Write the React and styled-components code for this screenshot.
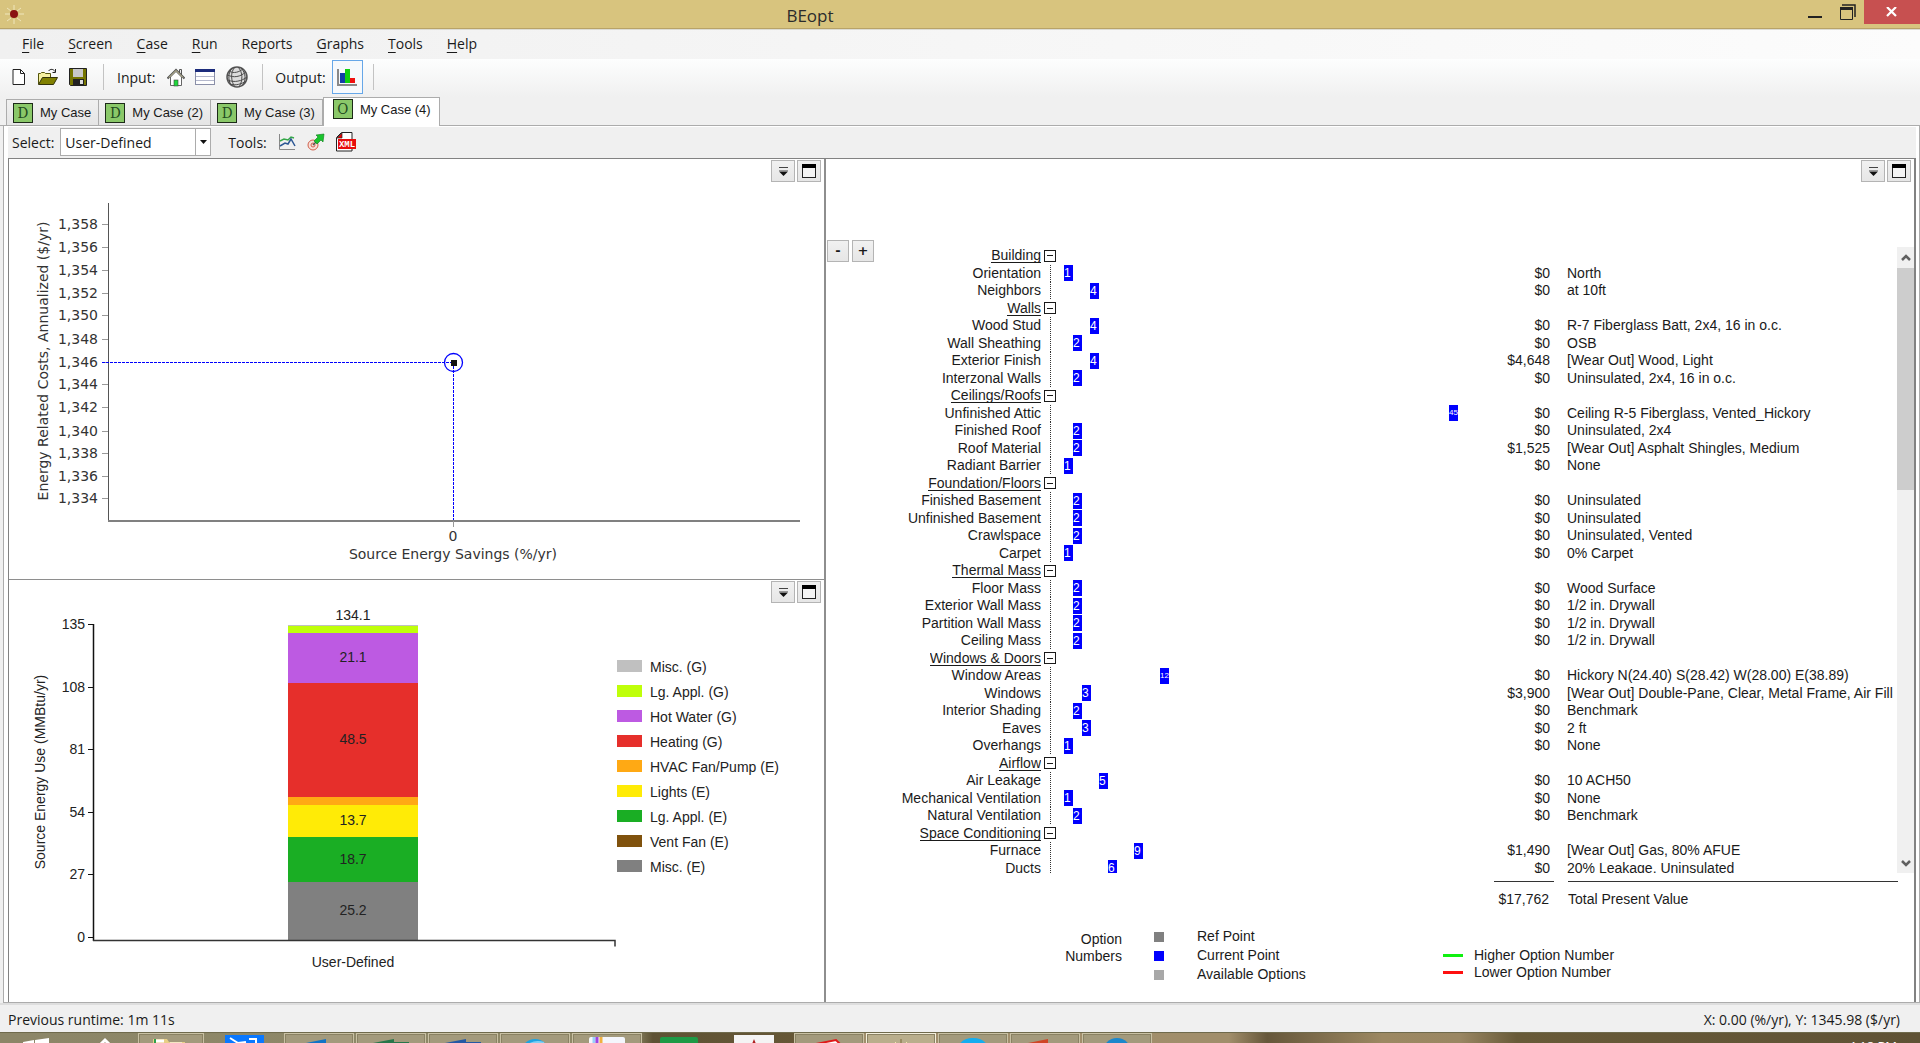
import React from 'react';
import styled, { createGlobalStyle, css } from 'styled-components';

const GlobalStyle = createGlobalStyle`
  * {
    box-sizing: border-box;
  }
  body {
    margin: 0;
    background: #f0f0f0;
    color: #1a1a1a;
    font-family: 'Open Sans', 'Noto Sans', sans-serif;
    font-size: 14px;
  }
  button, select {
    font: inherit;
    color: inherit;
    padding: 0;
    border: 0;
    background: none;
  }
  svg {
    display: block;
  }
`;

//===================================================
// ===================== Data =======================
//===================================================

const MENUS = [
  ['', 'F', 'ile'],
  ['', 'S', 'creen'],
  ['', 'C', 'ase'],
  ['', 'R', 'un'],
  ['Re', 'p', 'orts'],
  ['', 'G', 'raphs'],
  ['', 'T', 'ools'],
  ['', 'H', 'elp']
];

const TABS = [
  { letter: 'D', name: 'My Case' },
  { letter: 'D', name: 'My Case (2)' },
  { letter: 'D', name: 'My Case (3)' },
  { letter: 'O', name: 'My Case (4)', active: true }
];

// [label, option number, cost, description]; a row with only a label is a category
const OPTIONS = [
  ['Building'],
  ['Orientation', 1, '$0', 'North'],
  ['Neighbors', 4, '$0', 'at 10ft'],
  ['Walls'],
  ['Wood Stud', 4, '$0', 'R-7 Fiberglass Batt, 2x4, 16 in o.c.'],
  ['Wall Sheathing', 2, '$0', 'OSB'],
  ['Exterior Finish', 4, '$4,648', '[Wear Out] Wood, Light'],
  ['Interzonal Walls', 2, '$0', 'Uninsulated, 2x4, 16 in o.c.'],
  ['Ceilings/Roofs'],
  ['Unfinished Attic', 45, '$0', 'Ceiling R-5 Fiberglass, Vented_Hickory'],
  ['Finished Roof', 2, '$0', 'Uninsulated, 2x4'],
  ['Roof Material', 2, '$1,525', '[Wear Out] Asphalt Shingles, Medium'],
  ['Radiant Barrier', 1, '$0', 'None'],
  ['Foundation/Floors'],
  ['Finished Basement', 2, '$0', 'Uninsulated'],
  ['Unfinished Basement', 2, '$0', 'Uninsulated'],
  ['Crawlspace', 2, '$0', 'Uninsulated, Vented'],
  ['Carpet', 1, '$0', '0% Carpet'],
  ['Thermal Mass'],
  ['Floor Mass', 2, '$0', 'Wood Surface'],
  ['Exterior Wall Mass', 2, '$0', '1/2 in. Drywall'],
  ['Partition Wall Mass', 2, '$0', '1/2 in. Drywall'],
  ['Ceiling Mass', 2, '$0', '1/2 in. Drywall'],
  ['Windows & Doors'],
  ['Window Areas', 12, '$0', 'Hickory N(24.40) S(28.42) W(28.00) E(38.89)'],
  ['Windows', 3, '$3,900', '[Wear Out] Double-Pane, Clear, Metal Frame, Air Fill'],
  ['Interior Shading', 2, '$0', 'Benchmark'],
  ['Eaves', 3, '$0', '2 ft'],
  ['Overhangs', 1, '$0', 'None'],
  ['Airflow'],
  ['Air Leakage', 5, '$0', '10 ACH50'],
  ['Mechanical Ventilation', 1, '$0', 'None'],
  ['Natural Ventilation', 2, '$0', 'Benchmark'],
  ['Space Conditioning'],
  ['Furnace', 9, '$1,490', '[Wear Out] Gas, 80% AFUE'],
  ['Ducts', 6, '$0', '20% Leakage, Uninsulated']
];

const COST_TICKS = [
  ['1,358', 64], ['1,356', 87], ['1,354', 110], ['1,352', 133], ['1,350', 155],
  ['1,348', 179], ['1,346', 202], ['1,344', 224], ['1,342', 247], ['1,340', 271],
  ['1,338', 293], ['1,336', 316], ['1,334', 338]
];

const USE_TICKS = [['135', 44], ['108', 107], ['81', 169], ['54', 232], ['27', 294], ['0', 357]];

// top and bottom of each piece of the stacked bar
const STACK = [
  { top: 45, bottom: 46, color: '#c0c0c0' },
  { top: 46, bottom: 53, color: '#bfff0a' },
  { top: 53, bottom: 103, color: '#bd5ae2', value: '21.1' },
  { top: 103, bottom: 217, color: '#e62f2b', value: '48.5' },
  { top: 217, bottom: 225, color: '#ffa914' },
  { top: 225, bottom: 257, color: '#ffeb06', value: '13.7' },
  { top: 257, bottom: 302, color: '#1aae24', value: '18.7' },
  { top: 302, bottom: 360, color: '#808080', value: '25.2' }
];

const END_USES = [
  ['Misc. (G)', '#c0c0c0'],
  ['Lg. Appl. (G)', '#bfff0a'],
  ['Hot Water (G)', '#bd5ae2'],
  ['Heating (G)', '#e62f2b'],
  ['HVAC Fan/Pump (E)', '#ffa914'],
  ['Lights (E)', '#ffeb06'],
  ['Lg. Appl. (E)', '#1aae24'],
  ['Vent Fan (E)', '#80520d'],
  ['Misc. (E)', '#808080']
];

//===================================================
// ================ Window chrome ===================
//===================================================

const Window = styled.div`
  display: flex;
  flex-direction: column;
  height: 100vh;
  overflow: hidden;
`;

const TitleBar = styled.header`
  display: flex;
  height: 30px;
  flex: none;
  background: #d8c47e;
  border-bottom: 1px solid #dcdcd4;
  box-shadow: inset 0 -1px 0 #b8a368;
`;

const TitleIcon = styled.div`
  width: 300px;
  padding: 5px 0 0 5px;
`;

const Title = styled.h1`
  flex: 1;
  margin: 0;
  padding-top: 4px;
  text-align: center;
  font-size: 17px;
  line-height: 24px;
  font-weight: 400;
  color: #2b2b2b;
`;

const WindowButtons = styled.div`
  display: flex;
  justify-content: flex-end;
  width: 600px;
`;

const WindowButton = styled.button`
  display: flex;
  align-items: center;
  justify-content: center;
  width: ${(props) => (props.$close ? 56 : 33)}px;
  height: 24px;
  background: ${(props) => (props.$close ? '#c75050' : 'transparent')};
`;

const MenuBar = styled.nav`
  display: flex;
  flex: none;
  align-items: flex-start;
  gap: 24px;
  height: 29px;
  padding-left: 22px;
  line-height: 27px;
  background: linear-gradient(to right, #f0f0f0, #fcfcfc);
  & u {
    text-underline-offset: 3px;
  }
`;

const ToolBar = styled.div`
  display: flex;
  flex: none;
  align-items: center;
  height: 38px;
  padding: 0 0 2px 10px;
  background: linear-gradient(to bottom, #fdfefe, #f0f0f0);
`;

const ToolButton = styled.button`
  display: flex;
  align-items: center;
  justify-content: center;
  width: ${(props) => props.$width || 29}px;
  height: 34px;
  ${(props) => props.$pressed && css`
    border: 1px solid #66a7e8;
    background: #f6f9fc;
  `}
`;

const Separator = styled.div`
  width: 1px;
  height: 26px;
  margin: 0 ${(props) => props.$right || 13}px 0 ${(props) => props.$left || 10}px;
  background: #c3c3c3;
`;

const BarText = styled.span`
  white-space: nowrap;
  margin-right: 6px;
`;

//===================================================
// ===================== Tabs =======================
//===================================================

const TabStrip = styled.div`
  display: flex;
  flex: none;
  align-items: flex-end;
  height: 29px;
  padding-left: 6px;
  border-bottom: 1px solid #acacac;
`;

const Tab = styled.button`
  display: flex;
  gap: 7px;
  align-items: ${(props) => (props.$active ? 'flex-start' : 'center')};
  height: ${(props) => (props.$active ? 29 : 26)}px;
  margin-bottom: ${(props) => (props.$active ? -1 : 0)}px;
  padding: ${(props) => (props.$active ? '1px 8px 0 9px' : '0 7px 0 6px')};
  border: 1px solid #acacac;
  border-bottom: 0;
  border-left-width: ${(props) => (props.$first || props.$active ? 1 : 0)}px;
  background: ${(props) => (props.$active ? '#fff' : 'linear-gradient(to bottom, #f0f0f0, #e5e5e5)')};
  font-family: 'Liberation Sans', sans-serif;
  font-size: 13px;
  line-height: 22px;
`;

const CaseBadge = styled.span`
  display: block;
  width: 20px;
  height: 20px;
  border: 1px solid #1c2a18;
  background: #8ac869;
  color: #1f4a1f;
  font-family: 'DejaVu Serif Condensed', 'DejaVu Serif', serif;
  font-size: 15px;
  line-height: 18px;
  text-align: center;
`;

//===================================================
// =================== Case page ====================
//===================================================

const Page = styled.main`
  display: flex;
  flex: 1;
  flex-direction: column;
  min-height: 0;
  margin-left: 3px;
  padding: 1px 3px 0 4px;
  border: 1px solid #acacac;
  border-top: 0;
  background: #fff;
`;

const SelectBar = styled.div`
  display: flex;
  flex: none;
  align-items: center;
  height: 31px;
  padding: 0 0 1px 4px;
  background: #f0f0f0;
`;

const DropDown = styled.div`
  display: flex;
  width: 151px;
  height: 28px;
  margin-right: 17px;
  border: 1px solid #acacac;
  background: #fff;
  & > select {
    flex: 1;
    min-width: 0;
    padding-left: 4px;
    appearance: none;
  }
  & > span {
    display: flex;
    align-items: center;
    justify-content: center;
    width: 15px;
    border-left: 1px solid #acacac;
  }
`;

const Panels = styled.div`
  display: grid;
  flex: 1;
  min-height: 0;
  grid-template-columns: 817fr 1088fr;
  border: 1px solid #828282;
  border-width: 1px 2px 0 1px;
`;

const LeftColumn = styled.div`
  display: grid;
  min-height: 0;
  grid-template-rows: 420fr 423fr;
  border-right: 2px solid #8e8e8e;
`;

const Panel = styled.section`
  position: relative;
  min-height: 0;
  & + & {
    border-top: 1px solid #8e8e8e;
  }
  & > svg {
    width: 100%;
    height: 100%;
  }
`;

// sits over the corner of the chart
const PanelButtons = styled.div`
  position: absolute;
  top: 1px;
  right: 3px;
  display: flex;
  gap: 2px;
`;

const SmallButton = styled.button`
  display: flex;
  align-items: center;
  justify-content: center;
  width: ${(props) => props.$size || 24}px;
  height: ${(props) => props.$size || 22}px;
  border: 1px solid #b4b4b4;
  background: linear-gradient(to bottom, #f1f1f1, #e6e6e6);
  font-family: 'DejaVu Sans', sans-serif;
  font-size: 13px;
  font-weight: 700;
  line-height: 16px;
`;

//===================================================
// ================= Option panel ===================
//===================================================

const OptionPanel = styled(Panel)`
  display: flex;
  flex-direction: column;
  padding-top: 81px;
  font-family: 'Liberation Sans', sans-serif;
`;

const OptionBody = styled.div`
  display: flex;
  flex: 1;
  min-height: 0;
`;

const FoldButtons = styled.div`
  display: flex;
  flex: none;
  align-items: flex-start;
  gap: 3px;
  width: 52px;
  padding-left: 1px;
`;

const OptionView = styled.div`
  display: flex;
  flex: 1;
  min-width: 0;
  margin-top: 7px;
  overflow: hidden;
`;

const OptionScroll = styled.div`
  flex: 1;
  min-width: 0;
  overflow: hidden;
`;

const OptionTable = styled.table`
  width: 100%;
  table-layout: fixed;
  border-collapse: collapse;
  & td, & th {
    padding: 0;
    font-weight: 400;
    line-height: 17px;
    white-space: nowrap;
  }
  & th {
    text-align: right;
  }
`;

const OptionRow = styled.tr`
  height: 17px;
  &:nth-child(even) {
    height: 18px;
  }
`;

const CategoryName = styled.span`
  border-bottom: 1px solid #1a1a1a;
  display: inline-block;
  height: 16px;
  line-height: 17px;
  overflow: hidden;
  vertical-align: top;
`;

const ToggleCell = styled.td`
  vertical-align: middle;
`;

const Toggle = styled.button`
  display: flex;
  align-items: center;
  justify-content: center;
  width: 12px;
  height: 12px;
  margin-left: 3px;
  border: 1px solid #1a1a1a;
  &::before {
    content: '';
    width: 6px;
    height: 1px;
    background: #1a1a1a;
  }
`;

const Guide = styled.div`
  width: 1px;
  height: 17px;
  margin-left: 9px;
  background: repeating-linear-gradient(to bottom, #333 0, #333 1px, #fff 1px, #fff 2px);
`;

const Marker = styled.div`
  width: 9px;
  height: 16px;
  background: #0000fe;
  color: #fff;
  font-size: ${(props) => (props.$wide ? 8 : 12)}px;
  line-height: 16px;
`;

const Cost = styled.td`
  text-align: right;
`;

const Description = styled.td`
  && {
    padding-left: 17px;
  }
`;

const ScrollBar = styled.div`
  display: flex;
  flex: none;
  flex-direction: column;
  width: 17px;
  background: #f0f0f0;
`;

const ScrollArrow = styled.button`
  display: flex;
  flex: none;
  align-items: center;
  justify-content: center;
  height: 21px;
`;

const ScrollTrack = styled.div`
  flex: 1;
  & > div {
    height: 38%;
    background: #cdcdcd;
  }
`;

const Totals = styled.div`
  display: flex;
  flex: none;
  justify-content: flex-end;
  gap: 14px;
  padding: 8px 16px 0 0;
  line-height: 35px;
`;

const TotalCell = styled.div`
  width: ${(props) => props.$width}px;
  padding-right: 5px;
  border-top: 1px solid #333;
  text-align: ${(props) => props.$align || 'left'};
`;

const OptionLegend = styled.div`
  display: flex;
  flex: none;
  align-items: flex-start;
  height: 85px;
  padding: 10px 0 0 235px;
`;

const LegendTitle = styled.div`
  width: 61px;
  margin-right: 32px;
  line-height: 17px;
  padding-top: 4px;
  text-align: right;
`;

const LegendList = styled.ul`
  display: flex;
  flex-direction: column;
  flex: none;
  width: ${(props) => props.$width}px;
  margin: 0;
  padding: ${(props) => props.$top || 0}px 0 0;
  list-style: none;
  line-height: ${(props) => props.$line}px;
`;

const LegendItem = styled.li`
  display: flex;
  align-items: center;
  gap: ${(props) => props.$gap}px;
  white-space: nowrap;
  &::before {
    content: '';
    width: ${(props) => props.$swatch[0]}px;
    height: ${(props) => props.$swatch[1]}px;
    background: ${(props) => props.$color};
  }
`;

//===================================================
// ============ Status bar and task bar =============
//===================================================

const StatusBar = styled.footer`
  display: flex;
  flex: none;
  justify-content: space-between;
  height: 29px;
  padding: 2px 20px 0 8px;
  border-top: 2px solid #dedede;
  background: #f0f0f0;
  line-height: 26px;
`;

const TaskBar = styled.div`
  display: flex;
  flex: none;
  gap: 2px;
  height: 11px;
  overflow: hidden;
  border-top: 1px solid #6f6a4c;
  background: linear-gradient(to right, #8c8668 0, #8f8867 33%, #5e5234 34%, #665736 42%, #a08e6c 45%, #a18e6b 64%, #66573a 66%, #9c8862 72%, #9a8763 76%, #685a38 79%, #5f5235 100%);
`;

const Task = styled.button`
  display: flex;
  flex: none;
  justify-content: center;
  width: ${(props) => props.$width || 70}px;
  height: 40px;
  padding-top: ${(props) => (props.$open ? 3 : 2)}px;
  ${(props) => props.$open && css`
    border: 1px solid ${props.$active ? '#f4efdc' : '#c9c1a4'};
    background: ${props.$active ? '#b9ae8c' : '#a39a7c'};
    box-shadow: inset 0 0 0 1px #8a8263;
  `}
`;

const Clock = styled.span`
  margin-left: auto;
  padding: 5px 23px 0 0;
  color: #fff;
  font-size: 13px;
  line-height: 16px;
`;

//===================================================
// ===================== Icons ======================
//===================================================

const SunIcon = () => (
  <svg width="20" height="20" viewBox="0 0 20 20">
    <g stroke="#efe6bc" strokeWidth="1">
      <path d="M9 0v5M9 14v5M0 9h5M14 9h5M2 3l4 3M16 3l-4 3M2 16l4-3M16 16l-4-3" />
    </g>
    <circle cx="9" cy="9" r="4" fill="#8a1212" />
  </svg>
);

const NewIcon = () => (
  <svg width="16" height="18" viewBox="0 0 16 18">
    <path d="M2 1.500h7.500l4 4v11H2z" fill="#fff" stroke="#222" />
    <path d="M9.500 1.500v4h4" fill="none" stroke="#222" />
  </svg>
);

const OpenIcon = () => (
  <svg width="22" height="18" viewBox="0 0 22 18">
    <path d="M1.500 16V5.500h2l1-1h3l1 1h5V9" fill="#f5f0a0" stroke="#55550a" />
    <path d="M1.500 16.500l4-7h15l-4 7z" fill="#808000" stroke="#33330a" />
    <path d="M11.500 3c2-2.500 5-2 6.500.5M18.500 1v3.500h-3" fill="none" stroke="#222" />
  </svg>
);

const SaveIcon = () => (
  <svg width="18" height="18" viewBox="0 0 18 18">
    <path d="M.5.5h17v17h-16l-1-1z" fill="#757500" stroke="#222" />
    <rect x="4" y="1" width="10" height="8" fill="#c8c8c8" />
    <rect x="4" y="11" width="11" height="6" fill="#222" />
    <rect x="11" y="12" width="3" height="4" fill="#ddd" />
  </svg>
);

const HouseIcon = () => (
  <svg width="18" height="19" viewBox="0 0 18 19">
    <path d="M12.500 5V1.500h2V7" fill="#eee" stroke="#555" />
    <path d="M3.500 9v8.500h11V9L9 3.500z" fill="#fff" stroke="#666" />
    <path d="M.5 10.500L9 2l8.500 8.500" fill="none" stroke="#555" strokeWidth="2" />
    <path d="M2 9.500L9 2.500l7 7" fill="none" stroke="#d8d2a4" />
    <rect x="7" y="12" width="4" height="6" fill="#1fd83b" stroke="#444" strokeWidth=".6" />
  </svg>
);

const GridIcon = () => (
  <svg width="21" height="17" viewBox="0 0 21 17">
    <rect x=".5" y=".5" width="19" height="15" fill="#fff" stroke="#8a8fa8" />
    <rect x="0" y="0" width="20" height="3" fill="#1c2c7c" />
    <path d="M1 7.500h18M1 11.500h18" stroke="#b4b8cc" />
  </svg>
);

const GlobeIcon = () => (
  <svg width="22" height="22" viewBox="0 0 22 22">
    <circle cx="11" cy="11" r="10" fill="#dcdcdc" stroke="#555" strokeWidth="1.500" />
    <g fill="none" stroke="#4c4c4c">
      <path d="M3 5c5 3 10 1 14-2M1.500 9c6 3 13 2 18-3M2 14c6 3 14 1 19-3M4 18c5 2 12 0 16-3" />
      <path d="M9 1C4 6 5 16 9 21M12 1c5 5 5 14 1 20M15 2c5 5 5 12 2 17M6 2C2 7 2 14 5 19" />
    </g>
  </svg>
);

const BarsIcon = () => (
  <svg width="20" height="19" viewBox="0 0 20 19">
    <path d="M1 1v16h19" fill="none" stroke="#888" strokeWidth="2" />
    <rect x="3" y="5" width="5" height="10" fill="#123ea6" />
    <rect x="8" y="1" width="5" height="14" fill="#10d010" />
    <rect x="13" y="10" width="5" height="5" fill="#f01010" />
  </svg>
);

const LinesIcon = () => (
  <svg width="18" height="18" viewBox="0 0 18 18">
    <path d="M1.500 1v15.500H17" fill="none" stroke="#888" />
    <path d="M2 8l4-2 4 1 3-3 3 1" fill="none" stroke="#35a848" strokeWidth="1.500" />
    <path d="M2 13l5-3 3 1 3-5 4 7" fill="none" stroke="#2c5794" strokeWidth="1.500" />
  </svg>
);

const TargetIcon = () => (
  <svg width="18" height="18" viewBox="0 0 18 18">
    <circle cx="6" cy="12" r="5" fill="#f7dfd8" stroke="#d0604c" />
    <circle cx="6" cy="12" r="2" fill="none" stroke="#d0604c" />
    <path d="M6 12l5-5" stroke="#555" strokeWidth="1.500" />
    <path d="M9 2l8-1-1 8-2-2-4 4-3-3 4-4z" fill="#18c42c" stroke="#0a7a18" strokeWidth=".6" />
  </svg>
);

const XmlIcon = () => (
  <svg width="21" height="20" viewBox="0 0 21 20">
    <path d="M6.500.5H17v18.500H1.500V5.500z" fill="#fff" stroke="#222" />
    <path d="M2 6l5-5v5z" fill="#e00" stroke="#222" strokeWidth=".7" />
    <rect x="3" y="7" width="18" height="10" fill="#e80c0c" />
    <text x="12" y="15" textAnchor="middle" fontFamily="Liberation Mono, monospace" fontWeight="700" fontSize="9" fill="#fff">XML</text>
  </svg>
);

const OptionsIcon = () => (
  <svg width="9" height="9" viewBox="0 0 9 9">
    <path d="M0 .5h9" stroke="#444" />
    <path d="M0 3.500h9" stroke="#999" />
    <path d="M0 4.500h9L4.500 9z" fill="#111" />
  </svg>
);

const MaximizeIcon = () => (
  <svg width="14" height="14" viewBox="0 0 14 14">
    <rect x=".5" y=".5" width="13" height="13" fill="#f4f4f4" stroke="#222" />
    <rect width="14" height="4" fill="#000" />
  </svg>
);

const Chevron = ({ down }) => (
  <svg width="10" height="8" viewBox="0 0 10 8">
    <path d={down ? 'M1 2l4 4 4-4' : 'M1 6l4-4 4 4'} fill="none" stroke="#606060" strokeWidth="2.500" />
  </svg>
);

//===================================================
// ==================== Panels ======================
//===================================================

const CornerButtons = () => (
  <PanelButtons>
    <SmallButton aria-label="Graph options"><OptionsIcon /></SmallButton>
    <SmallButton aria-label="Maximize"><MaximizeIcon /></SmallButton>
  </PanelButtons>
);

function CostChart() {
  return (
    <svg viewBox="0 -1 815 420" fontFamily="DejaVu Sans, sans-serif" fontSize="14" fill="#333">
      {COST_TICKS.map(([label, y]) => (
        <g key={label}>
          <text x="89" y={y + 5} textAnchor="end">{label}</text>
          <path d={`M93 ${y + 0.5}h6`} stroke="#999" />
        </g>
      ))}
      <path d="M99.500 43v318" stroke="#555" />
      <path d="M99 361h692" stroke="#808080" strokeWidth="2" />
      <path d="M444.500 361v6" stroke="#999" />
      <g fill="none" stroke="#0000fe" strokeDasharray="3 1">
        <path d="M93 202.500h351" />
        <path d="M444.500 202v158" />
      </g>
      <circle cx="444.500" cy="202.500" r="9" fill="none" stroke="#0000fe" strokeWidth="1.300" />
      <rect x="442" y="200" width="6" height="6" fill="#111" />
      <text x="444" y="381" textAnchor="middle">0</text>
      <text x="444" y="399" textAnchor="middle">Source Energy Savings (%/yr)</text>
      <text transform="translate(39 201) rotate(-90)" textAnchor="middle">Energy Related Costs, Annualized ($/yr)</text>
    </svg>
  );
}

function UseChart() {
  return (
    <svg viewBox="0 0 815 422" fontFamily="Liberation Sans, sans-serif" fontSize="14" fill="#222">
      {USE_TICKS.map(([label, y]) => (
        <g key={label}>
          <text x="76" y={y + 5} textAnchor="end">{label}</text>
          <path d={`M79 ${y + 0.5}h5`} stroke="#111" />
        </g>
      ))}
      {STACK.map(({ top, bottom, color, value }) => (
        <g key={top}>
          <rect x="279" y={top} width="130" height={bottom - top} fill={color} />
          {value && <text x="344" y={(top + bottom) / 2 + 4} textAnchor="middle">{value}</text>}
        </g>
      ))}
      <text x="344" y="40" textAnchor="middle">134.1</text>
      <path d="M84.500 44v317" stroke="#111" strokeWidth="1.500" />
      <path d="M84 360.500h522v6" fill="none" stroke="#333" strokeWidth="1.500" />
      <text x="344" y="387" textAnchor="middle">User-Defined</text>
      <text transform="translate(36 192) rotate(-90)" textAnchor="middle">Source Energy Use (MMBtu/yr)</text>
      {END_USES.map(([name, color], i) => (
        <g key={name}>
          <rect x="608" y={80 + i * 25} width="25" height="12" fill={color} />
          <text x="641" y={92 + i * 25}>{name}</text>
        </g>
      ))}
    </svg>
  );
}

const Option = ({ label, number, cost, text }) => {
  if (!number) {
    return (
      <OptionRow>
        <th scope="row"><CategoryName>{label}</CategoryName></th>
        <ToggleCell><Toggle aria-label={`Collapse ${label}`} /></ToggleCell>
        <td colSpan={3} />
      </OptionRow>
    );
  }
  return (
    <OptionRow>
      <th scope="row">{label}</th>
      <ToggleCell><Guide /></ToggleCell>
      <td>
        <Marker $wide={number > 9} style={{ marginLeft: Math.round((number - 1) * 35 / 4) }}>{number}</Marker>
      </td>
      <Cost>{cost}</Cost>
      <Description>{text}</Description>
    </OptionRow>
  );
};

function OptionList() {
  return (
    <OptionPanel>
      <CornerButtons />
      <OptionBody>
        <FoldButtons>
          <SmallButton $size={22}>-</SmallButton>
          <SmallButton $size={22}>+</SmallButton>
        </FoldButtons>
        <OptionView>
          <OptionScroll>
            <OptionTable>
              <colgroup>
                <col width="163" />
                <col width="23" />
                <col />
                <col width="60" />
                <col width="347" />
              </colgroup>
              <tbody>
                {OPTIONS.map(([label, number, cost, text]) => (
                  <Option key={label} label={label} number={number} cost={cost} text={text} />
                ))}
              </tbody>
            </OptionTable>
          </OptionScroll>
          <ScrollBar>
            <ScrollArrow aria-label="Scroll up"><Chevron /></ScrollArrow>
            <ScrollTrack><div /></ScrollTrack>
            <ScrollArrow aria-label="Scroll down"><Chevron down /></ScrollArrow>
          </ScrollBar>
        </OptionView>
      </OptionBody>
      <Totals>
        <TotalCell $width={60} $align="right">$17,762</TotalCell>
        <TotalCell $width={330}>Total Present Value</TotalCell>
      </Totals>
      <OptionLegend>
        <LegendTitle>Option<br />Numbers</LegendTitle>
        <LegendList $width={289} $line={19}>
          <LegendItem $gap={33} $swatch={[10, 10]} $color="#808080">Ref Point</LegendItem>
          <LegendItem $gap={33} $swatch={[10, 10]} $color="#0000fe">Current Point</LegendItem>
          <LegendItem $gap={33} $swatch={[10, 10]} $color="#a8a8a8">Available Options</LegendItem>
        </LegendList>
        <LegendList $width={200} $line={17} $top={20}>
          <LegendItem $gap={11} $swatch={[20, 3]} $color="#10f010">Higher Option Number</LegendItem>
          <LegendItem $gap={11} $swatch={[20, 3]} $color="#fe1010">Lower Option Number</LegendItem>
        </LegendList>
      </OptionLegend>
    </OptionPanel>
  );
}

//===================================================
// =================== Task bar =====================
//===================================================

const Tasks = () => (
  <TaskBar>
    <Task $width={72} aria-label="Start">
      <svg width="26" height="26" viewBox="0 0 26 26"><path d="M0 7l11-2v8H0zM12 5l14-2v10H12zM0 14h11v8L0 20zM12 14h14v10l-14-2z" fill="#fff" /></svg>
    </Task>
    <Task $width={62} aria-label="Show more">
      <svg width="20" height="20" viewBox="0 0 20 20"><path d="M4 11l6-6 6 6" fill="none" stroke="#fff" strokeWidth="3" /></svg>
    </Task>
    <Task $open $width={66} aria-label="Files">
      <svg width="36" height="30" viewBox="0 0 36 30"><path d="M0 2h14l2 3h16v22H0z" fill="#e8cf86" /><path d="M3 4h8M17 7h12" stroke="#fff" strokeWidth="3" /><path d="M2 2v5" stroke="#2ea04c" strokeWidth="2" /></svg>
    </Task>
    <Task $width={76} aria-label="Remote desktop">
      <svg width="39" height="30" viewBox="0 0 39 30"><path d="M0 0h39v30H0z" fill="#0a78ff" /><path d="M5 3l8 5 8-1M24 4h7v6" stroke="#fff" strokeWidth="2" fill="none" /></svg>
    </Task>
    <Task $open aria-label="Mail">
      <svg width="34" height="30" viewBox="0 0 34 30"><path d="M4 6l20-4v28H4z" fill="#1173c6" /></svg>
    </Task>
    <Task $open aria-label="Spreadsheet">
      <svg width="36" height="30" viewBox="0 0 36 30"><path d="M0 6l21-4v3h15v24H0z" fill="#27764a" /></svg>
    </Task>
    <Task $open aria-label="Documents">
      <svg width="36" height="30" viewBox="0 0 36 30"><path d="M0 6l21-4v3h15v24H0z" fill="#2458a4" /></svg>
    </Task>
    <Task $open aria-label="Browser">
      <svg width="30" height="30" viewBox="0 0 30 30"><circle cx="15" cy="16" r="14" fill="#1fa3e2" /><path d="M7 9c5-4 11-5 17-3" stroke="#7fd0f4" strokeWidth="2" fill="none" /></svg>
    </Task>
    <Task $open aria-label="Notes">
      <svg width="36" height="30" viewBox="0 0 36 30"><rect width="36" height="30" rx="2" fill="#f4f6fc" /><path d="M5 0v30" stroke="#9ad0f8" strokeWidth="3" /><path d="M8 0v30" stroke="#a044e0" strokeWidth="3" /><path d="M12 0v30" stroke="#f0b040" strokeWidth="3" /></svg>
    </Task>
    <Task aria-label="Publisher">
      <svg width="38" height="30" viewBox="0 0 38 30"><rect y="2" width="38" height="28" rx="2" fill="#1e9a46" /></svg>
    </Task>
    <Task $width={76} aria-label="Drafting">
      <svg width="40" height="30" viewBox="0 0 40 30"><path d="M0 0h40v30H0z" fill="#f4f4f4" /><path d="M20 4l8 20H12z" fill="#b02020" /></svg>
    </Task>
    <Task $open aria-label="Modeling">
      <svg width="30" height="30" viewBox="0 0 30 30"><path d="M2 7l20-4 6 6v16H2z" fill="#fff" stroke="#e01818" strokeWidth="2" /></svg>
    </Task>
    <Task $open $active aria-label="BEopt">
      <svg width="20" height="20" viewBox="0 0 20 20"><path d="M10 2v8" stroke="#7a6a3a" /><path d="M4 5l4 4M16 5l-4 4" stroke="#f4e9ae" /></svg>
    </Task>
    <Task $open aria-label="Chat">
      <svg width="30" height="30" viewBox="0 0 30 30"><path d="M1 8q4-7 14-7t14 7v20H1z" fill="#14adf0" /></svg>
    </Task>
    <Task $open aria-label="Slides">
      <svg width="34" height="30" viewBox="0 0 34 30"><path d="M0 6l20-4v4h14v22H0z" fill="#d04526" /></svg>
    </Task>
    <Task $open aria-label="Help">
      <svg width="28" height="30" viewBox="0 0 28 30"><circle cx="14" cy="15" r="14" fill="#1b87cc" /></svg>
    </Task>
    <Clock>4:18 PM</Clock>
  </TaskBar>
);

export default function App() {
  return (
    <Window>
      <GlobalStyle />
      <TitleBar>
        <TitleIcon><SunIcon /></TitleIcon>
        <Title>BEopt</Title>
        <WindowButtons>
          <WindowButton aria-label="Minimize">
            <svg width="14" height="16" viewBox="0 0 14 16"><path d="M0 13h14" stroke="#222" strokeWidth="2" /></svg>
          </WindowButton>
          <WindowButton aria-label="Restore">
            <svg width="16" height="16" viewBox="0 0 16 16">
              <path d="M2 1h13v12" fill="none" stroke="#222" strokeWidth="1.500" />
              <path d="M.5 4h12v11.500H.5z" fill="none" stroke="#222" />
              <path d="M0 4.500h13" stroke="#222" strokeWidth="3" />
            </svg>
          </WindowButton>
          <WindowButton $close aria-label="Close">
            <svg width="12" height="10" viewBox="0 0 12 10"><path d="M1 0l9 9M10 0L1 9" stroke="#fff" strokeWidth="2.200" /></svg>
          </WindowButton>
        </WindowButtons>
      </TitleBar>
      <MenuBar>
        {MENUS.map(([before, key, after]) => (
          <button key={after}>{before}<u>{key}</u>{after}</button>
        ))}
      </MenuBar>
      <ToolBar>
        <ToolButton $width={18} aria-label="New"><NewIcon /></ToolButton>
        <ToolButton $width={40} aria-label="Open"><OpenIcon /></ToolButton>
        <ToolButton $width={20} aria-label="Save"><SaveIcon /></ToolButton>
        <Separator $left={15} />
        <BarText>Input:</BarText>
        <ToolButton aria-label="Building"><HouseIcon /></ToolButton>
        <ToolButton $width={31} aria-label="Options"><GridIcon /></ToolButton>
        <ToolButton $width={31} aria-label="Site"><GlobeIcon /></ToolButton>
        <Separator $right={12} />
        <BarText>Output:</BarText>
        <ToolButton $pressed $width={31} aria-label="Results"><BarsIcon /></ToolButton>
        <Separator />
      </ToolBar>
      <TabStrip>
        {TABS.map((tab, i) => (
          <Tab key={tab.name} $active={tab.active} $first={i === 0}>
            <CaseBadge>{tab.letter}</CaseBadge>
            {tab.name}
          </Tab>
        ))}
      </TabStrip>
      <Page>
        <SelectBar>
          <BarText as="label" htmlFor="point">Select:</BarText>
          <DropDown>
            <select id="point" defaultValue="user">
              <option value="user">User-Defined</option>
            </select>
            <span><svg width="7" height="4" viewBox="0 0 7 4"><path d="M0 0h7L3.500 4z" fill="#111" /></svg></span>
          </DropDown>
          <BarText>Tools:</BarText>
          <ToolButton aria-label="Plot"><LinesIcon /></ToolButton>
          <ToolButton aria-label="Go to point"><TargetIcon /></ToolButton>
          <ToolButton aria-label="Export"><XmlIcon /></ToolButton>
        </SelectBar>
        <Panels>
          <LeftColumn>
            <Panel>
              <CostChart />
              <CornerButtons />
            </Panel>
            <Panel>
              <UseChart />
              <CornerButtons />
            </Panel>
          </LeftColumn>
          <OptionList />
        </Panels>
      </Page>
      <StatusBar>
        <span>Previous runtime: 1m 11s</span>
        <span>X: 0.00 (%/yr), Y: 1345.98 ($/yr)</span>
      </StatusBar>
      <Tasks />
    </Window>
  );
}
